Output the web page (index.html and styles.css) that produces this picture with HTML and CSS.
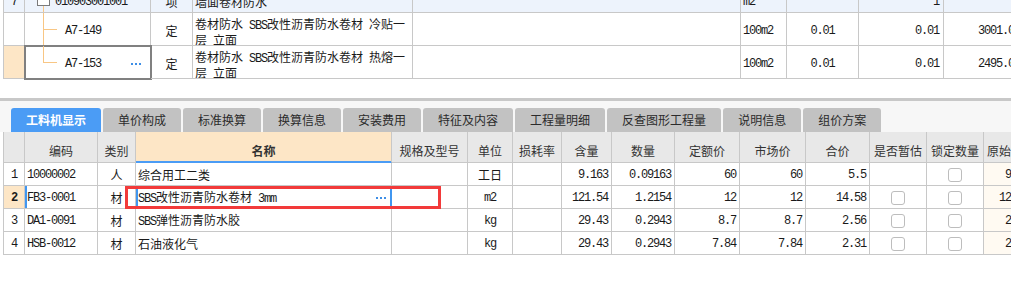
FILE: index.html
```html
<!DOCTYPE html>
<html lang="zh-CN">
<head>
    <meta charset="UTF-8">
    <title>工料机显示</title>
    <link rel="stylesheet" href="styles.css">
</head>
<body>
    <div class="top-pane">
        <div class="tree-grid">
            <div class="tree-row parent">
                <div class="cell center a">7</div>
                <div class="cell code root">
                    <span class="fold"></span><span class="tree-v from-fold"></span>
                    <span class="a">010903001001</span>
                </div>
                <div class="cell center">项</div>
                <div class="cell">墙面卷材防水</div>
                <div class="cell"></div>
                <div class="cell a">m2</div>
                <div class="cell"></div>
                <div class="cell right a">1</div>
                <div class="cell"></div>
            </div>
            <div class="tree-row">
                <div class="cell"></div>
                <div class="cell code">
                    <span class="tree-v full"></span><span class="tree-h"></span>
                    <span class="a">A7-149</span>
                </div>
                <div class="cell center">定</div>
                <div class="cell top">卷材防水<span class="a"> SBS</span>改性沥青防水卷材<span class="a"> </span>冷贴一<br>层<span class="a"> </span>立面</div>
                <div class="cell"></div>
                <div class="cell a">100m2</div>
                <div class="cell center a">0.01</div>
                <div class="cell right a">0.01</div>
                <div class="cell right a">3001.06</div>
            </div>
            <div class="tree-row">
                <div class="cell sel-num"></div>
                <div class="cell code selected">
                    <span class="tree-v half"></span><span class="tree-h"></span>
                    <span class="a">A7-153</span>
                    <svg class="more" width="10" height="2"><rect x="0" width="2" height="2"/><rect x="4" width="2" height="2"/><rect x="8" width="2" height="2"/></svg>
                </div>
                <div class="cell center">定</div>
                <div class="cell top">卷材防水<span class="a"> SBS</span>改性沥青防水卷材<span class="a"> </span>热熔一<br>层<span class="a"> </span>立面</div>
                <div class="cell"></div>
                <div class="cell a">100m2</div>
                <div class="cell center a">0.01</div>
                <div class="cell right a">0.01</div>
                <div class="cell right a">2495.06</div>
            </div>
        </div>
    </div>

    <div class="splitter"></div>

    <div class="tabs">
        <span class="tab active">工料机显示</span>
        <span class="tab">单价构成</span>
        <span class="tab">标准换算</span>
        <span class="tab">换算信息</span>
        <span class="tab">安装费用</span>
        <span class="tab">特征及内容</span>
        <span class="tab">工程量明细</span>
        <span class="tab">反查图形工程量</span>
        <span class="tab">说明信息</span>
        <span class="tab">组价方案</span>
    </div>

    <div class="res-grid">
        <div class="res-row head">
            <div class="cell"></div>
            <div class="cell">编码</div>
            <div class="cell">类别</div>
            <div class="cell name-hd">名称</div>
            <div class="cell">规格及型号</div>
            <div class="cell">单位</div>
            <div class="cell">损耗率</div>
            <div class="cell">含量</div>
            <div class="cell">数量</div>
            <div class="cell">定额价</div>
            <div class="cell">市场价</div>
            <div class="cell">合价</div>
            <div class="cell">是否暂估</div>
            <div class="cell">锁定数量</div>
            <div class="cell">原始含量</div>
        </div>

        <div class="res-row">
            <div class="cell center a">1</div>
            <div class="cell a">10000002</div>
            <div class="cell center">人</div>
            <div class="cell">综合用工二类</div>
            <div class="cell"></div>
            <div class="cell center">工日</div>
            <div class="cell"></div>
            <div class="cell right a">9.163</div>
            <div class="cell right a">0.09163</div>
            <div class="cell right a">60</div>
            <div class="cell right a">60</div>
            <div class="cell right a">5.5</div>
            <div class="cell center"></div>
            <div class="cell center"><span class="check"></span></div>
            <div class="cell right a orig">9.163</div>
        </div>

        <div class="res-row">
            <div class="cell center a sel-num">2</div>
            <div class="cell a focus-left">FB3-0001</div>
            <div class="cell center">材</div>
            <div class="cell name-sel">
                <span><span class="a">SBS</span>改性沥青防水卷材<span class="a"> 3mm</span></span>
                <svg class="more" width="10" height="2"><rect x="0" width="2" height="2"/><rect x="4" width="2" height="2"/><rect x="8" width="2" height="2"/></svg>
            </div>
            <div class="cell"></div>
            <div class="cell center a">m2</div>
            <div class="cell"></div>
            <div class="cell right a">121.54</div>
            <div class="cell right a">1.2154</div>
            <div class="cell right a">12</div>
            <div class="cell right a">12</div>
            <div class="cell right a">14.58</div>
            <div class="cell center"><span class="check"></span></div>
            <div class="cell center"><span class="check"></span></div>
            <div class="cell right a orig">121.54</div>
        </div>

        <div class="res-row">
            <div class="cell center a">3</div>
            <div class="cell a">DA1-0091</div>
            <div class="cell center">材</div>
            <div class="cell"><span><span class="a">SBS</span>弹性沥青防水胶</span></div>
            <div class="cell"></div>
            <div class="cell center a">kg</div>
            <div class="cell"></div>
            <div class="cell right a">29.43</div>
            <div class="cell right a">0.2943</div>
            <div class="cell right a">8.7</div>
            <div class="cell right a">8.7</div>
            <div class="cell right a">2.56</div>
            <div class="cell center"><span class="check"></span></div>
            <div class="cell center"><span class="check"></span></div>
            <div class="cell right a orig">29.43</div>
        </div>

        <div class="res-row">
            <div class="cell center a">4</div>
            <div class="cell a">HSB-0012</div>
            <div class="cell center">材</div>
            <div class="cell">石油液化气</div>
            <div class="cell"></div>
            <div class="cell center a">kg</div>
            <div class="cell"></div>
            <div class="cell right a">29.43</div>
            <div class="cell right a">0.2943</div>
            <div class="cell right a">7.84</div>
            <div class="cell right a">7.84</div>
            <div class="cell right a">2.31</div>
            <div class="cell center"><span class="check"></span></div>
            <div class="cell center"><span class="check"></span></div>
            <div class="cell right a orig">29.43</div>
        </div>

        <div class="mark"></div>
    </div>
</body>
</html>
```

FILE: styles.css
```css
body {
    margin: 0;
    width: 1011px;
    height: 282px;
    overflow: hidden;
    background: #fff;
    font-family: "Noto Sans CJK SC", sans-serif;
    font-size: 12px;
    color: #1a1a1a;
}

/* ascii text, close to the half-width bitmap font */
.a {
    font-family: "Liberation Mono", monospace;
    letter-spacing: -1.2px;
}

.cell {
    box-sizing: border-box;
    border-right: 1px solid #c8c8c8;
    border-bottom: 1px solid #c8c8c8;
    display: flex;
    align-items: center;
    padding: 4px 2px 0;
    line-height: 14px;
    white-space: nowrap;
    overflow: hidden;
    position: relative;
}

.center {
    justify-content: center;
}

.right {
    justify-content: flex-end;
    padding-right: 4px;
}

/* upper tree table */
.top-pane {
    height: 98px;
    overflow: hidden;
}

.tree-grid {
    margin: -12px 0 0 3px;
    border-left: 1px solid #c8c8c8;
    width: max-content;
}

.tree-row {
    display: grid;
    grid-template-columns: 21px 126px 42px 220px 328px 46px 72px 85px 81px;
    height: 33px;
}

.tree-row.parent {
    height: 25px;
    background: #edf3fc;
}

.cell.top {
    align-items: flex-start;
    padding-top: 4px;
    display: block;
}

.code {
    padding-left: 40px;
}

.code.root {
    padding-left: 30px;
}

.fold {
    position: absolute;
    left: 12px;
    top: 5px;
    width: 13px;
    height: 13px;
    box-sizing: border-box;
    border: 1px solid #7a7a7a;
    background: #fff;
}

.fold::after {
    content: "";
    position: absolute;
    left: 2px;
    right: 2px;
    top: 5px;
    height: 1px;
    background: #222;
}

.tree-v {
    position: absolute;
    left: 18px;
    width: 1px;
    background: #f8c684;
}

.tree-v.from-fold {
    top: 18px;
    bottom: 0;
}

.tree-v.full {
    top: 0;
    bottom: 0;
}

.tree-v.half {
    top: 0;
    height: 16px;
}

.tree-h {
    position: absolute;
    left: 18px;
    top: 16px;
    width: 14px;
    height: 1px;
    background: #f8c684;
}

.code.selected {
    outline: 2px solid #808080;
    outline-offset: -1px;
    box-shadow: inset 1px 0 #3d8ef0;
}

.more {
    margin-left: auto;
    margin-right: 7px;
    fill: #3d8ee6;
    flex: none;
}

.sel-num {
    background: #fde6c6;
    font-weight: bold;
}

.splitter {
    height: 3px;
    background: #c8c8c8;
}

/* tabs */
.tabs {
    display: flex;
    gap: 2px;
    padding: 7px 0 0 11px;
    height: 24px;
    background: #f7f7f7;
}

.tab {
    padding: 0 15px;
    line-height: 24px;
    background: #c2c2c2;
    color: #2b2b2b;
    border-radius: 3px 3px 0 0;
}

.tab.active {
    background: #4b9cf5;
    color: #fff;
    font-weight: bold;
}

/* lower resource table */
.res-grid {
    position: relative;
    margin-left: 3px;
    border-left: 1px solid #c8c8c8;
    width: max-content;
}

.res-row {
    display: grid;
    grid-template-columns: 21px 73px 38px 256px 76px 45px 49px 50px 63px 65px 66px 64px 57px 57px 55px;
    height: 23px;
}

.res-row .cell {
    padding-top: 2px;
}

.res-row .cell.right {
    padding-right: 3px;
}

.res-row.head {
    height: 31px;
    background: #e8e8e8;
    color: #333;
}

.res-row.head .cell {
    justify-content: center;
    padding-top: 7px;
}

.name-hd {
    background: #fde6c6;
    font-weight: bold;
    border-bottom-color: #4b9cf5 !important;
    box-shadow: inset 0 -1px #4b9cf5;
}

.focus-left {
    box-shadow: inset 2px 0 #4096f0;
}

.name-sel {
    border-right-color: #4096f0;
    box-shadow: inset 2px 0 #4096f0, inset -1px 0 #4096f0;
}

.name-sel .more {
    margin-right: 3px;
}

.orig {
    background: #fffaf2;
}

.check {
    width: 14px;
    height: 14px;
    box-sizing: border-box;
    border: 1px solid #bdbdbd;
    border-radius: 3px;
    background: #fff;
}

.mark {
    position: absolute;
    left: 121px;
    top: 54px;
    width: 316px;
    height: 23px;
    box-sizing: border-box;
    border: 3px solid #f23a3a;
}
```
